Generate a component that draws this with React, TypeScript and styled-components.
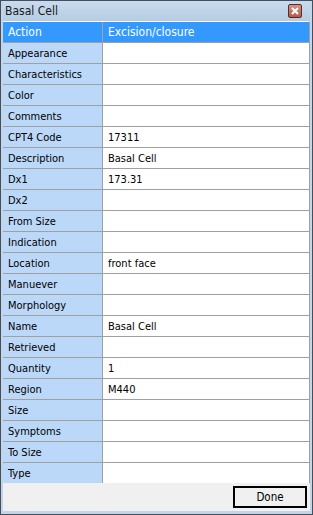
import { Fragment } from "react";
import styled, { createGlobalStyle } from "styled-components";

const GlobalStyle = createGlobalStyle`
  html, body {
    margin: 0;
    padding: 0;
    background: #ffffff;
  }
  body {
    font-family: "DejaVu Sans Condensed", "DejaVu Sans", sans-serif;
  }
`;

const Window = styled.div`
  box-sizing: border-box;
  width: 313px;
  height: 515px;
  border: 1px solid #434f5c;
  background: #c3d5e8;
  display: flex;
  flex-direction: column;
  padding: 0 2px 3px 2px;
`;

const TitleBar = styled.div`
  height: 20px;
  display: flex;
  align-items: center;
  justify-content: space-between;
  padding: 0 8px 0 2px;
  background: linear-gradient(#c9dbee, #b5cce2);
  font-size: 12px;
  color: #1a1a1a;
`;

const CloseButton = styled.div`
  box-sizing: border-box;
  width: 14px;
  height: 14px;
  border: 1px solid #5a2a24;
  border-radius: 2px;
  background: linear-gradient(#d49486, #b5594a);
  display: flex;
  align-items: center;
  justify-content: center;
`;

const Grid = styled.div`
  display: grid;
  grid-template-columns: 99px 1fr;
  column-gap: 1px;
  row-gap: 1px;
  background: #a0a0a0;
  border-top: 1px solid #ffffff;
  border-right: 1px solid #a0a0a0;
`;

const Cell = styled.div<{ $kind: "head" | "label" | "value" }>`
  height: 20px;
  display: flex;
  align-items: center;
  padding-left: 5px;
  font-size: ${({ $kind }) => ($kind === "head" ? "12px" : "11px")};
  background: ${({ $kind }) =>
    $kind === "head" ? "#3399ff" : $kind === "label" ? "#bcd8f8" : "#ffffff"};
  color: ${({ $kind }) => ($kind === "head" ? "#ffffff" : "#000000")};
`;

const Footer = styled.div`
  flex: 1;
  background: #f0f0f0;
  display: flex;
  justify-content: flex-end;
  align-items: center;
  padding-right: 3px;
`;

const DoneButton = styled.button`
  box-sizing: border-box;
  width: 74px;
  height: 22px;
  border: 2px solid #000000;
  background: #f0f0f0;
  font-family: "DejaVu Sans Condensed", "DejaVu Sans", sans-serif;
  font-size: 11.5px;
  color: #000000;
  padding: 0;
`;

const rows: [string, string][] = [
  ["Appearance", ""],
  ["Characteristics", ""],
  ["Color", ""],
  ["Comments", ""],
  ["CPT4 Code", "17311"],
  ["Description", "Basal Cell"],
  ["Dx1", "173.31"],
  ["Dx2", ""],
  ["From Size", ""],
  ["Indication", ""],
  ["Location", "front face"],
  ["Manuever", ""],
  ["Morphology", ""],
  ["Name", "Basal Cell"],
  ["Retrieved", ""],
  ["Quantity", "1"],
  ["Region", "M440"],
  ["Size", ""],
  ["Symptoms", ""],
  ["To Size", ""],
  ["Type", ""],
];

export default function App() {
  return (
    <>
      <GlobalStyle />
      <Window>
        <TitleBar>
          <span>Basal Cell</span>
          <CloseButton>
            <svg width="8" height="8" viewBox="0 0 8 8">
              <path d="M1 1 L7 7 M7 1 L1 7" stroke="#ffffff" strokeWidth="2" />
            </svg>
          </CloseButton>
        </TitleBar>
        <Grid>
          <Cell $kind="head">Action</Cell>
          <Cell $kind="head">Excision/closure</Cell>
          {rows.map(([label, value]) => (
            <Fragment key={label}>
              <Cell $kind="label">{label}</Cell>
              <Cell $kind="value">{value}</Cell>
            </Fragment>
          ))}
        </Grid>
        <Footer>
          <DoneButton>Done</DoneButton>
        </Footer>
      </Window>
    </>
  );
}
